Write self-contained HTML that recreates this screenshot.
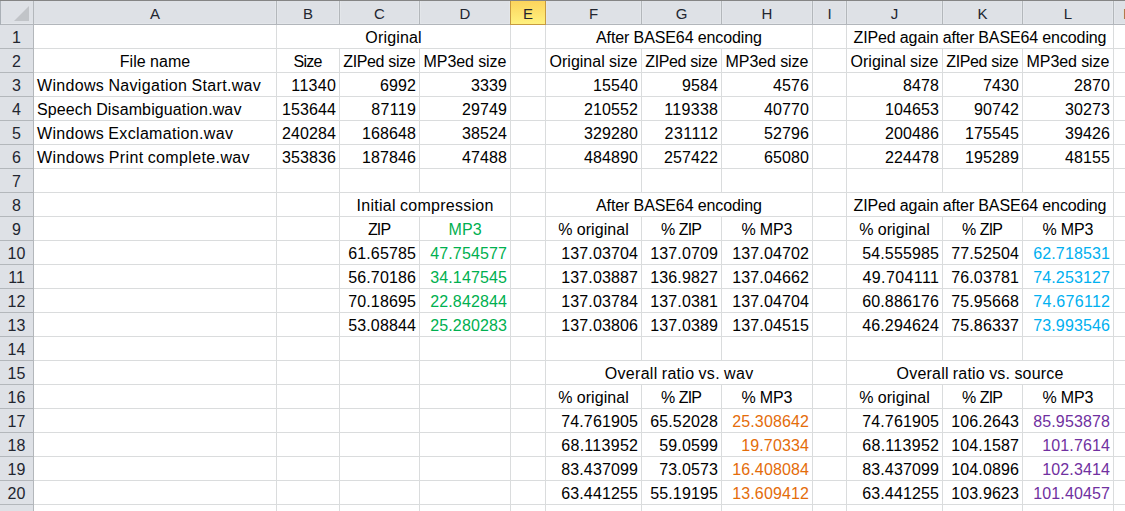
<!DOCTYPE html><html><head><meta charset="utf-8"><style>
html,body{margin:0;padding:0;}
body{width:1125px;height:511px;overflow:hidden;position:relative;background:#fff;font-family:"Liberation Sans",sans-serif;}
div{position:absolute;box-sizing:border-box;}
.t{white-space:nowrap;font-size:16px;line-height:20px;height:20px;color:#000;}
.l{text-align:left}.r{text-align:right}.c{text-align:center}
.h{white-space:nowrap;font-size:15px;line-height:20px;height:20px;color:#222630;text-align:center}

</style></head><body>
<div style="left:276px;top:25px;width:1px;height:487px;background:#dadcdd"></div>
<div style="left:339px;top:48px;width:1px;height:464px;background:#dadcdd"></div>
<div style="left:419px;top:48px;width:1px;height:145px;background:#dadcdd"></div>
<div style="left:419px;top:216px;width:1px;height:296px;background:#dadcdd"></div>
<div style="left:510px;top:25px;width:1px;height:487px;background:#dadcdd"></div>
<div style="left:545px;top:25px;width:1px;height:487px;background:#dadcdd"></div>
<div style="left:641px;top:48px;width:1px;height:145px;background:#dadcdd"></div>
<div style="left:641px;top:216px;width:1px;height:145px;background:#dadcdd"></div>
<div style="left:641px;top:384px;width:1px;height:128px;background:#dadcdd"></div>
<div style="left:721px;top:48px;width:1px;height:145px;background:#dadcdd"></div>
<div style="left:721px;top:216px;width:1px;height:145px;background:#dadcdd"></div>
<div style="left:721px;top:384px;width:1px;height:128px;background:#dadcdd"></div>
<div style="left:812px;top:25px;width:1px;height:487px;background:#dadcdd"></div>
<div style="left:846px;top:25px;width:1px;height:487px;background:#dadcdd"></div>
<div style="left:942px;top:48px;width:1px;height:145px;background:#dadcdd"></div>
<div style="left:942px;top:216px;width:1px;height:145px;background:#dadcdd"></div>
<div style="left:942px;top:384px;width:1px;height:128px;background:#dadcdd"></div>
<div style="left:1022px;top:48px;width:1px;height:145px;background:#dadcdd"></div>
<div style="left:1022px;top:216px;width:1px;height:145px;background:#dadcdd"></div>
<div style="left:1022px;top:384px;width:1px;height:128px;background:#dadcdd"></div>
<div style="left:1113px;top:25px;width:1px;height:487px;background:#dadcdd"></div>
<div style="left:34px;top:48px;width:1091px;height:1px;background:#dadcdd"></div>
<div style="left:34px;top:72px;width:1091px;height:1px;background:#dadcdd"></div>
<div style="left:34px;top:96px;width:1091px;height:1px;background:#dadcdd"></div>
<div style="left:34px;top:120px;width:1091px;height:1px;background:#dadcdd"></div>
<div style="left:34px;top:144px;width:1091px;height:1px;background:#dadcdd"></div>
<div style="left:34px;top:168px;width:1091px;height:1px;background:#dadcdd"></div>
<div style="left:34px;top:192px;width:1091px;height:1px;background:#dadcdd"></div>
<div style="left:34px;top:216px;width:1091px;height:1px;background:#dadcdd"></div>
<div style="left:34px;top:240px;width:1091px;height:1px;background:#dadcdd"></div>
<div style="left:34px;top:264px;width:1091px;height:1px;background:#dadcdd"></div>
<div style="left:34px;top:288px;width:1091px;height:1px;background:#dadcdd"></div>
<div style="left:34px;top:312px;width:1091px;height:1px;background:#dadcdd"></div>
<div style="left:34px;top:336px;width:1091px;height:1px;background:#dadcdd"></div>
<div style="left:34px;top:360px;width:1091px;height:1px;background:#dadcdd"></div>
<div style="left:34px;top:384px;width:1091px;height:1px;background:#dadcdd"></div>
<div style="left:34px;top:408px;width:1091px;height:1px;background:#dadcdd"></div>
<div style="left:34px;top:432px;width:1091px;height:1px;background:#dadcdd"></div>
<div style="left:34px;top:456px;width:1091px;height:1px;background:#dadcdd"></div>
<div style="left:34px;top:480px;width:1091px;height:1px;background:#dadcdd"></div>
<div style="left:34px;top:504px;width:1091px;height:1px;background:#dadcdd"></div>
<div style="left:0;top:0;width:1125px;height:24px;background:#dee1e6"></div>
<div style="left:0;top:0;width:1125px;height:1px;background:#858585"></div>
<div style="left:0;top:24px;width:1125px;height:1px;background:#b2b6bb"></div>
<div style="left:0;top:23px;width:1125px;height:1px;background:#e3e6ea"></div>
<div style="left:0;top:25px;width:33px;height:486px;background:#dee1e6"></div>
<div style="left:0;top:1px;width:1px;height:24px;background:#aab0b6"></div>
<div style="left:33px;top:1px;width:1px;height:510px;background:#b3b7bb"></div>
<svg style="position:absolute;left:0;top:0" width="34" height="25"><polygon points="14,21 29,21 29,6" fill="#c1c4c8"/></svg>
<div style="left:275px;top:1px;width:1px;height:22px;background:#e3e6ea"></div>
<div style="left:277px;top:1px;width:1px;height:22px;background:#e3e6ea"></div>
<div style="left:276px;top:1px;width:1px;height:23px;background:#b3b7bb"></div>
<div style="left:338px;top:1px;width:1px;height:22px;background:#e3e6ea"></div>
<div style="left:340px;top:1px;width:1px;height:22px;background:#e3e6ea"></div>
<div style="left:339px;top:1px;width:1px;height:23px;background:#b3b7bb"></div>
<div style="left:418px;top:1px;width:1px;height:22px;background:#e3e6ea"></div>
<div style="left:420px;top:1px;width:1px;height:22px;background:#e3e6ea"></div>
<div style="left:419px;top:1px;width:1px;height:23px;background:#b3b7bb"></div>
<div style="left:509px;top:1px;width:1px;height:22px;background:#e3e6ea"></div>
<div style="left:511px;top:1px;width:1px;height:22px;background:#e3e6ea"></div>
<div style="left:510px;top:1px;width:1px;height:23px;background:#b3b7bb"></div>
<div style="left:544px;top:1px;width:1px;height:22px;background:#e3e6ea"></div>
<div style="left:546px;top:1px;width:1px;height:22px;background:#e3e6ea"></div>
<div style="left:545px;top:1px;width:1px;height:23px;background:#b3b7bb"></div>
<div style="left:640px;top:1px;width:1px;height:22px;background:#e3e6ea"></div>
<div style="left:642px;top:1px;width:1px;height:22px;background:#e3e6ea"></div>
<div style="left:641px;top:1px;width:1px;height:23px;background:#b3b7bb"></div>
<div style="left:720px;top:1px;width:1px;height:22px;background:#e3e6ea"></div>
<div style="left:722px;top:1px;width:1px;height:22px;background:#e3e6ea"></div>
<div style="left:721px;top:1px;width:1px;height:23px;background:#b3b7bb"></div>
<div style="left:811px;top:1px;width:1px;height:22px;background:#e3e6ea"></div>
<div style="left:813px;top:1px;width:1px;height:22px;background:#e3e6ea"></div>
<div style="left:812px;top:1px;width:1px;height:23px;background:#b3b7bb"></div>
<div style="left:845px;top:1px;width:1px;height:22px;background:#e3e6ea"></div>
<div style="left:847px;top:1px;width:1px;height:22px;background:#e3e6ea"></div>
<div style="left:846px;top:1px;width:1px;height:23px;background:#b3b7bb"></div>
<div style="left:941px;top:1px;width:1px;height:22px;background:#e3e6ea"></div>
<div style="left:943px;top:1px;width:1px;height:22px;background:#e3e6ea"></div>
<div style="left:942px;top:1px;width:1px;height:23px;background:#b3b7bb"></div>
<div style="left:1021px;top:1px;width:1px;height:22px;background:#e3e6ea"></div>
<div style="left:1023px;top:1px;width:1px;height:22px;background:#e3e6ea"></div>
<div style="left:1022px;top:1px;width:1px;height:23px;background:#b3b7bb"></div>
<div style="left:1112px;top:1px;width:1px;height:22px;background:#e3e6ea"></div>
<div style="left:1114px;top:1px;width:1px;height:22px;background:#e3e6ea"></div>
<div style="left:1113px;top:1px;width:1px;height:23px;background:#b3b7bb"></div>
<div style="left:510px;top:1px;width:36px;height:24px;border:1px solid #c79a3f;border-top:none;background:linear-gradient(#fcd45c,#fff17f)"></div>
<div class="h" style="left:34px;top:4px;width:242px">A</div>
<div class="h" style="left:277px;top:4px;width:62px">B</div>
<div class="h" style="left:340px;top:4px;width:79px">C</div>
<div class="h" style="left:420px;top:4px;width:90px">D</div>
<div class="h" style="left:511px;top:4px;width:34px">E</div>
<div class="h" style="left:546px;top:4px;width:95px">F</div>
<div class="h" style="left:642px;top:4px;width:79px">G</div>
<div class="h" style="left:722px;top:4px;width:90px">H</div>
<div class="h" style="left:813px;top:4px;width:33px">I</div>
<div class="h" style="left:847px;top:4px;width:95px">J</div>
<div class="h" style="left:943px;top:4px;width:79px">K</div>
<div class="h" style="left:1023px;top:4px;width:90px">L</div>
<div class="h" style="left:1113px;top:4px;width:33px">M</div>
<div style="left:0;top:48px;width:33px;height:1px;background:#b3b7bb"></div>
<div class="h" style="left:0;top:28px;width:33px;font-size:16px">1</div>
<div style="left:0;top:72px;width:33px;height:1px;background:#b3b7bb"></div>
<div class="h" style="left:0;top:52px;width:33px;font-size:16px">2</div>
<div style="left:0;top:96px;width:33px;height:1px;background:#b3b7bb"></div>
<div class="h" style="left:0;top:76px;width:33px;font-size:16px">3</div>
<div style="left:0;top:120px;width:33px;height:1px;background:#b3b7bb"></div>
<div class="h" style="left:0;top:100px;width:33px;font-size:16px">4</div>
<div style="left:0;top:144px;width:33px;height:1px;background:#b3b7bb"></div>
<div class="h" style="left:0;top:124px;width:33px;font-size:16px">5</div>
<div style="left:0;top:168px;width:33px;height:1px;background:#b3b7bb"></div>
<div class="h" style="left:0;top:148px;width:33px;font-size:16px">6</div>
<div style="left:0;top:192px;width:33px;height:1px;background:#b3b7bb"></div>
<div class="h" style="left:0;top:172px;width:33px;font-size:16px">7</div>
<div style="left:0;top:216px;width:33px;height:1px;background:#b3b7bb"></div>
<div class="h" style="left:0;top:196px;width:33px;font-size:16px">8</div>
<div style="left:0;top:240px;width:33px;height:1px;background:#b3b7bb"></div>
<div class="h" style="left:0;top:220px;width:33px;font-size:16px">9</div>
<div style="left:0;top:264px;width:33px;height:1px;background:#b3b7bb"></div>
<div class="h" style="left:0;top:244px;width:33px;font-size:16px">10</div>
<div style="left:0;top:288px;width:33px;height:1px;background:#b3b7bb"></div>
<div class="h" style="left:0;top:268px;width:33px;font-size:16px">11</div>
<div style="left:0;top:312px;width:33px;height:1px;background:#b3b7bb"></div>
<div class="h" style="left:0;top:292px;width:33px;font-size:16px">12</div>
<div style="left:0;top:336px;width:33px;height:1px;background:#b3b7bb"></div>
<div class="h" style="left:0;top:316px;width:33px;font-size:16px">13</div>
<div style="left:0;top:360px;width:33px;height:1px;background:#b3b7bb"></div>
<div class="h" style="left:0;top:340px;width:33px;font-size:16px">14</div>
<div style="left:0;top:384px;width:33px;height:1px;background:#b3b7bb"></div>
<div class="h" style="left:0;top:364px;width:33px;font-size:16px">15</div>
<div style="left:0;top:408px;width:33px;height:1px;background:#b3b7bb"></div>
<div class="h" style="left:0;top:388px;width:33px;font-size:16px">16</div>
<div style="left:0;top:432px;width:33px;height:1px;background:#b3b7bb"></div>
<div class="h" style="left:0;top:412px;width:33px;font-size:16px">17</div>
<div style="left:0;top:456px;width:33px;height:1px;background:#b3b7bb"></div>
<div class="h" style="left:0;top:436px;width:33px;font-size:16px">18</div>
<div style="left:0;top:480px;width:33px;height:1px;background:#b3b7bb"></div>
<div class="h" style="left:0;top:460px;width:33px;font-size:16px">19</div>
<div style="left:0;top:504px;width:33px;height:1px;background:#b3b7bb"></div>
<div class="h" style="left:0;top:484px;width:33px;font-size:16px">20</div>
<div class="h" style="left:0;top:508px;width:33px;font-size:16px">21</div>
<div class="t c" style="left:277px;top:28px;width:233px;"><span style="letter-spacing:0.177px;margin-right:-0.177px">Original</span></div>
<div class="t c" style="left:546px;top:28px;width:266px;"><span style="letter-spacing:-0.094px;word-spacing:-0.151px;margin-right:0.094px">After BASE64 encoding</span></div>
<div class="t c" style="left:847px;top:28px;width:266px;"><span style="letter-spacing:-0.109px;word-spacing:-0.137px;margin-right:0.109px">ZIPed again after BASE64 encoding</span></div>
<div class="t c" style="left:34px;top:52px;width:242px;"><span style="letter-spacing:0.077px;word-spacing:-0.323px;margin-right:-0.077px">File name</span></div>
<div class="t c" style="left:277px;top:52px;width:62px;"><span style="letter-spacing:-0.711px;margin-right:0.711px">Size</span></div>
<div class="t c" style="left:340px;top:52px;width:79px;"><span style="letter-spacing:-0.364px;word-spacing:0.119px;margin-right:0.364px">ZIPed size</span></div>
<div class="t c" style="left:420px;top:52px;width:90px;"><span style="letter-spacing:-0.053px;word-spacing:-0.192px;margin-right:0.053px">MP3ed size</span></div>
<div class="t c" style="left:546px;top:52px;width:95px;"><span style="letter-spacing:0.006px;word-spacing:-0.252px;margin-right:-0.006px">Original size</span></div>
<div class="t c" style="left:642px;top:52px;width:79px;"><span style="letter-spacing:-0.364px;word-spacing:0.119px;margin-right:0.364px">ZIPed size</span></div>
<div class="t c" style="left:722px;top:52px;width:90px;"><span style="letter-spacing:-0.053px;word-spacing:-0.192px;margin-right:0.053px">MP3ed size</span></div>
<div class="t c" style="left:847px;top:52px;width:95px;"><span style="letter-spacing:0.006px;word-spacing:-0.252px;margin-right:-0.006px">Original size</span></div>
<div class="t c" style="left:943px;top:52px;width:79px;"><span style="letter-spacing:-0.364px;word-spacing:0.119px;margin-right:0.364px">ZIPed size</span></div>
<div class="t c" style="left:1023px;top:52px;width:90px;"><span style="letter-spacing:-0.053px;word-spacing:-0.192px;margin-right:0.053px">MP3ed size</span></div>
<div class="t l" style="left:34px;top:76px;width:242px;padding-left:3px;"><span style="letter-spacing:0.328px;word-spacing:-0.573px;margin-right:-0.328px">Windows Navigation Start.wav</span></div>
<div class="t r" style="left:277px;top:76px;width:62px;padding-right:3px;"><span style="letter-spacing:0.338px;margin-right:-0.338px">11340</span></div>
<div class="t r" style="left:340px;top:76px;width:79px;padding-right:3px;"><span style="letter-spacing:0.102px;margin-right:-0.102px">6992</span></div>
<div class="t r" style="left:420px;top:76px;width:90px;padding-right:3px;"><span style="letter-spacing:0.102px;margin-right:-0.102px">3339</span></div>
<div class="t r" style="left:546px;top:76px;width:95px;padding-right:3px;"><span style="letter-spacing:0.100px;margin-right:-0.100px">15540</span></div>
<div class="t r" style="left:642px;top:76px;width:79px;padding-right:3px;"><span style="letter-spacing:0.102px;margin-right:-0.102px">9584</span></div>
<div class="t r" style="left:722px;top:76px;width:90px;padding-right:3px;"><span style="letter-spacing:0.102px;margin-right:-0.102px">4576</span></div>
<div class="t r" style="left:847px;top:76px;width:95px;padding-right:3px;"><span style="letter-spacing:0.102px;margin-right:-0.102px">8478</span></div>
<div class="t r" style="left:943px;top:76px;width:79px;padding-right:3px;"><span style="letter-spacing:0.102px;margin-right:-0.102px">7430</span></div>
<div class="t r" style="left:1023px;top:76px;width:90px;padding-right:3px;"><span style="letter-spacing:0.102px;margin-right:-0.102px">2870</span></div>
<div class="t l" style="left:34px;top:100px;width:242px;padding-left:3px;"><span style="letter-spacing:0.119px;word-spacing:-0.364px;margin-right:-0.119px">Speech Disambiguation.wav</span></div>
<div class="t r" style="left:277px;top:100px;width:62px;padding-right:3px;"><span style="letter-spacing:0.102px;margin-right:-0.102px">153644</span></div>
<div class="t r" style="left:340px;top:100px;width:79px;padding-right:3px;"><span style="letter-spacing:0.338px;margin-right:-0.338px">87119</span></div>
<div class="t r" style="left:420px;top:100px;width:90px;padding-right:3px;"><span style="letter-spacing:0.100px;margin-right:-0.100px">29749</span></div>
<div class="t r" style="left:546px;top:100px;width:95px;padding-right:3px;"><span style="letter-spacing:0.102px;margin-right:-0.102px">210552</span></div>
<div class="t r" style="left:642px;top:100px;width:79px;padding-right:3px;"><span style="letter-spacing:0.299px;margin-right:-0.299px">119338</span></div>
<div class="t r" style="left:722px;top:100px;width:90px;padding-right:3px;"><span style="letter-spacing:0.100px;margin-right:-0.100px">40770</span></div>
<div class="t r" style="left:847px;top:100px;width:95px;padding-right:3px;"><span style="letter-spacing:0.102px;margin-right:-0.102px">104653</span></div>
<div class="t r" style="left:943px;top:100px;width:79px;padding-right:3px;"><span style="letter-spacing:0.100px;margin-right:-0.100px">90742</span></div>
<div class="t r" style="left:1023px;top:100px;width:90px;padding-right:3px;"><span style="letter-spacing:0.100px;margin-right:-0.100px">30273</span></div>
<div class="t l" style="left:34px;top:124px;width:242px;padding-left:3px;"><span style="letter-spacing:0.322px;word-spacing:-0.567px;margin-right:-0.322px">Windows Exclamation.wav</span></div>
<div class="t r" style="left:277px;top:124px;width:62px;padding-right:3px;"><span style="letter-spacing:0.102px;margin-right:-0.102px">240284</span></div>
<div class="t r" style="left:340px;top:124px;width:79px;padding-right:3px;"><span style="letter-spacing:0.102px;margin-right:-0.102px">168648</span></div>
<div class="t r" style="left:420px;top:124px;width:90px;padding-right:3px;"><span style="letter-spacing:0.100px;margin-right:-0.100px">38524</span></div>
<div class="t r" style="left:546px;top:124px;width:95px;padding-right:3px;"><span style="letter-spacing:0.102px;margin-right:-0.102px">329280</span></div>
<div class="t r" style="left:642px;top:124px;width:79px;padding-right:3px;"><span style="letter-spacing:0.497px;margin-right:-0.497px">231112</span></div>
<div class="t r" style="left:722px;top:124px;width:90px;padding-right:3px;"><span style="letter-spacing:0.100px;margin-right:-0.100px">52796</span></div>
<div class="t r" style="left:847px;top:124px;width:95px;padding-right:3px;"><span style="letter-spacing:0.102px;margin-right:-0.102px">200486</span></div>
<div class="t r" style="left:943px;top:124px;width:79px;padding-right:3px;"><span style="letter-spacing:0.102px;margin-right:-0.102px">175545</span></div>
<div class="t r" style="left:1023px;top:124px;width:90px;padding-right:3px;"><span style="letter-spacing:0.100px;margin-right:-0.100px">39426</span></div>
<div class="t l" style="left:34px;top:148px;width:242px;padding-left:3px;"><span style="letter-spacing:0.372px;word-spacing:-0.617px;margin-right:-0.372px">Windows Print complete.wav</span></div>
<div class="t r" style="left:277px;top:148px;width:62px;padding-right:3px;"><span style="letter-spacing:0.102px;margin-right:-0.102px">353836</span></div>
<div class="t r" style="left:340px;top:148px;width:79px;padding-right:3px;"><span style="letter-spacing:0.102px;margin-right:-0.102px">187846</span></div>
<div class="t r" style="left:420px;top:148px;width:90px;padding-right:3px;"><span style="letter-spacing:0.100px;margin-right:-0.100px">47488</span></div>
<div class="t r" style="left:546px;top:148px;width:95px;padding-right:3px;"><span style="letter-spacing:0.102px;margin-right:-0.102px">484890</span></div>
<div class="t r" style="left:642px;top:148px;width:79px;padding-right:3px;"><span style="letter-spacing:0.102px;margin-right:-0.102px">257422</span></div>
<div class="t r" style="left:722px;top:148px;width:90px;padding-right:3px;"><span style="letter-spacing:0.100px;margin-right:-0.100px">65080</span></div>
<div class="t r" style="left:847px;top:148px;width:95px;padding-right:3px;"><span style="letter-spacing:0.102px;margin-right:-0.102px">224478</span></div>
<div class="t r" style="left:943px;top:148px;width:79px;padding-right:3px;"><span style="letter-spacing:0.102px;margin-right:-0.102px">195289</span></div>
<div class="t r" style="left:1023px;top:148px;width:90px;padding-right:3px;"><span style="letter-spacing:0.100px;margin-right:-0.100px">48155</span></div>
<div class="t c" style="left:340px;top:196px;width:170px;"><span style="letter-spacing:0.269px;word-spacing:-0.514px;margin-right:-0.269px">Initial compression</span></div>
<div class="t c" style="left:546px;top:196px;width:266px;"><span style="letter-spacing:-0.094px;word-spacing:-0.151px;margin-right:0.094px">After BASE64 encoding</span></div>
<div class="t c" style="left:847px;top:196px;width:266px;"><span style="letter-spacing:-0.109px;word-spacing:-0.137px;margin-right:0.109px">ZIPed again after BASE64 encoding</span></div>
<div class="t c" style="left:340px;top:220px;width:79px;"><span style="letter-spacing:-0.890px;margin-right:0.890px">ZIP</span></div>
<div class="t c" style="left:420px;top:220px;width:90px;color:#00b050;"><span style="letter-spacing:0.141px;margin-right:-0.141px">MP3</span></div>
<div class="t c" style="left:546px;top:220px;width:95px;"><span style="letter-spacing:0.068px;word-spacing:-0.313px;margin-right:-0.068px">% original</span></div>
<div class="t c" style="left:642px;top:220px;width:79px;"><span style="letter-spacing:-0.785px;word-spacing:0.540px;margin-right:0.785px">% ZIP</span></div>
<div class="t c" style="left:722px;top:220px;width:90px;"><span style="letter-spacing:-0.167px;word-spacing:-0.079px;margin-right:0.167px">% MP3</span></div>
<div class="t c" style="left:847px;top:220px;width:95px;"><span style="letter-spacing:0.068px;word-spacing:-0.313px;margin-right:-0.068px">% original</span></div>
<div class="t c" style="left:943px;top:220px;width:79px;"><span style="letter-spacing:-0.785px;word-spacing:0.540px;margin-right:0.785px">% ZIP</span></div>
<div class="t c" style="left:1023px;top:220px;width:90px;"><span style="letter-spacing:-0.167px;word-spacing:-0.079px;margin-right:0.167px">% MP3</span></div>
<div class="t r" style="left:340px;top:244px;width:79px;padding-right:3px;"><span style="letter-spacing:0.158px;margin-right:-0.158px">61.65785</span></div>
<div class="t r" style="left:420px;top:244px;width:90px;padding-right:3px;color:#00b050;"><span style="letter-spacing:0.151px;margin-right:-0.151px">47.754577</span></div>
<div class="t r" style="left:546px;top:244px;width:95px;padding-right:3px;"><span style="letter-spacing:0.151px;margin-right:-0.151px">137.03704</span></div>
<div class="t r" style="left:642px;top:244px;width:79px;padding-right:3px;"><span style="letter-spacing:0.158px;margin-right:-0.158px">137.0709</span></div>
<div class="t r" style="left:722px;top:244px;width:90px;padding-right:3px;"><span style="letter-spacing:0.151px;margin-right:-0.151px">137.04702</span></div>
<div class="t r" style="left:847px;top:244px;width:95px;padding-right:3px;"><span style="letter-spacing:0.151px;margin-right:-0.151px">54.555985</span></div>
<div class="t r" style="left:943px;top:244px;width:79px;padding-right:3px;"><span style="letter-spacing:0.158px;margin-right:-0.158px">77.52504</span></div>
<div class="t r" style="left:1023px;top:244px;width:90px;padding-right:3px;color:#00b0f0;"><span style="letter-spacing:0.151px;margin-right:-0.151px">62.718531</span></div>
<div class="t r" style="left:340px;top:268px;width:79px;padding-right:3px;"><span style="letter-spacing:0.158px;margin-right:-0.158px">56.70186</span></div>
<div class="t r" style="left:420px;top:268px;width:90px;padding-right:3px;color:#00b050;"><span style="letter-spacing:0.151px;margin-right:-0.151px">34.147545</span></div>
<div class="t r" style="left:546px;top:268px;width:95px;padding-right:3px;"><span style="letter-spacing:0.151px;margin-right:-0.151px">137.03887</span></div>
<div class="t r" style="left:642px;top:268px;width:79px;padding-right:3px;"><span style="letter-spacing:0.158px;margin-right:-0.158px">136.9827</span></div>
<div class="t r" style="left:722px;top:268px;width:90px;padding-right:3px;"><span style="letter-spacing:0.151px;margin-right:-0.151px">137.04662</span></div>
<div class="t r" style="left:847px;top:268px;width:95px;padding-right:3px;"><span style="letter-spacing:0.415px;margin-right:-0.415px">49.704111</span></div>
<div class="t r" style="left:943px;top:268px;width:79px;padding-right:3px;"><span style="letter-spacing:0.158px;margin-right:-0.158px">76.03781</span></div>
<div class="t r" style="left:1023px;top:268px;width:90px;padding-right:3px;color:#00b0f0;"><span style="letter-spacing:0.151px;margin-right:-0.151px">74.253127</span></div>
<div class="t r" style="left:340px;top:292px;width:79px;padding-right:3px;"><span style="letter-spacing:0.158px;margin-right:-0.158px">70.18695</span></div>
<div class="t r" style="left:420px;top:292px;width:90px;padding-right:3px;color:#00b050;"><span style="letter-spacing:0.151px;margin-right:-0.151px">22.842844</span></div>
<div class="t r" style="left:546px;top:292px;width:95px;padding-right:3px;"><span style="letter-spacing:0.151px;margin-right:-0.151px">137.03784</span></div>
<div class="t r" style="left:642px;top:292px;width:79px;padding-right:3px;"><span style="letter-spacing:0.158px;margin-right:-0.158px">137.0381</span></div>
<div class="t r" style="left:722px;top:292px;width:90px;padding-right:3px;"><span style="letter-spacing:0.151px;margin-right:-0.151px">137.04704</span></div>
<div class="t r" style="left:847px;top:292px;width:95px;padding-right:3px;"><span style="letter-spacing:0.151px;margin-right:-0.151px">60.886176</span></div>
<div class="t r" style="left:943px;top:292px;width:79px;padding-right:3px;"><span style="letter-spacing:0.158px;margin-right:-0.158px">75.95668</span></div>
<div class="t r" style="left:1023px;top:292px;width:90px;padding-right:3px;color:#00b0f0;"><span style="letter-spacing:0.283px;margin-right:-0.283px">74.676112</span></div>
<div class="t r" style="left:340px;top:316px;width:79px;padding-right:3px;"><span style="letter-spacing:0.158px;margin-right:-0.158px">53.08844</span></div>
<div class="t r" style="left:420px;top:316px;width:90px;padding-right:3px;color:#00b050;"><span style="letter-spacing:0.151px;margin-right:-0.151px">25.280283</span></div>
<div class="t r" style="left:546px;top:316px;width:95px;padding-right:3px;"><span style="letter-spacing:0.151px;margin-right:-0.151px">137.03806</span></div>
<div class="t r" style="left:642px;top:316px;width:79px;padding-right:3px;"><span style="letter-spacing:0.158px;margin-right:-0.158px">137.0389</span></div>
<div class="t r" style="left:722px;top:316px;width:90px;padding-right:3px;"><span style="letter-spacing:0.151px;margin-right:-0.151px">137.04515</span></div>
<div class="t r" style="left:847px;top:316px;width:95px;padding-right:3px;"><span style="letter-spacing:0.151px;margin-right:-0.151px">46.294624</span></div>
<div class="t r" style="left:943px;top:316px;width:79px;padding-right:3px;"><span style="letter-spacing:0.158px;margin-right:-0.158px">75.86337</span></div>
<div class="t r" style="left:1023px;top:316px;width:90px;padding-right:3px;color:#00b0f0;"><span style="letter-spacing:0.151px;margin-right:-0.151px">73.993546</span></div>
<div class="t c" style="left:546px;top:364px;width:266px;"><span style="letter-spacing:0.294px;word-spacing:-0.539px;margin-right:-0.294px">Overall ratio vs. wav</span></div>
<div class="t c" style="left:847px;top:364px;width:266px;"><span style="letter-spacing:0.199px;word-spacing:-0.445px;margin-right:-0.199px">Overall ratio vs. source</span></div>
<div class="t c" style="left:546px;top:388px;width:95px;"><span style="letter-spacing:0.068px;word-spacing:-0.313px;margin-right:-0.068px">% original</span></div>
<div class="t c" style="left:642px;top:388px;width:79px;"><span style="letter-spacing:-0.785px;word-spacing:0.540px;margin-right:0.785px">% ZIP</span></div>
<div class="t c" style="left:722px;top:388px;width:90px;"><span style="letter-spacing:-0.167px;word-spacing:-0.079px;margin-right:0.167px">% MP3</span></div>
<div class="t c" style="left:847px;top:388px;width:95px;"><span style="letter-spacing:0.068px;word-spacing:-0.313px;margin-right:-0.068px">% original</span></div>
<div class="t c" style="left:943px;top:388px;width:79px;"><span style="letter-spacing:-0.785px;word-spacing:0.540px;margin-right:0.785px">% ZIP</span></div>
<div class="t c" style="left:1023px;top:388px;width:90px;"><span style="letter-spacing:-0.167px;word-spacing:-0.079px;margin-right:0.167px">% MP3</span></div>
<div class="t r" style="left:546px;top:412px;width:95px;padding-right:3px;"><span style="letter-spacing:0.151px;margin-right:-0.151px">74.761905</span></div>
<div class="t r" style="left:642px;top:412px;width:79px;padding-right:3px;"><span style="letter-spacing:0.158px;margin-right:-0.158px">65.52028</span></div>
<div class="t r" style="left:722px;top:412px;width:90px;padding-right:3px;color:#e46c0a;"><span style="letter-spacing:0.151px;margin-right:-0.151px">25.308642</span></div>
<div class="t r" style="left:847px;top:412px;width:95px;padding-right:3px;"><span style="letter-spacing:0.151px;margin-right:-0.151px">74.761905</span></div>
<div class="t r" style="left:943px;top:412px;width:79px;padding-right:3px;"><span style="letter-spacing:0.158px;margin-right:-0.158px">106.2643</span></div>
<div class="t r" style="left:1023px;top:412px;width:90px;padding-right:3px;color:#7030a0;"><span style="letter-spacing:0.151px;margin-right:-0.151px">85.953878</span></div>
<div class="t r" style="left:546px;top:436px;width:95px;padding-right:3px;"><span style="letter-spacing:0.283px;margin-right:-0.283px">68.113952</span></div>
<div class="t r" style="left:642px;top:436px;width:79px;padding-right:3px;"><span style="letter-spacing:0.165px;margin-right:-0.165px">59.0599</span></div>
<div class="t r" style="left:722px;top:436px;width:90px;padding-right:3px;color:#e46c0a;"><span style="letter-spacing:0.158px;margin-right:-0.158px">19.70334</span></div>
<div class="t r" style="left:847px;top:436px;width:95px;padding-right:3px;"><span style="letter-spacing:0.283px;margin-right:-0.283px">68.113952</span></div>
<div class="t r" style="left:943px;top:436px;width:79px;padding-right:3px;"><span style="letter-spacing:0.158px;margin-right:-0.158px">104.1587</span></div>
<div class="t r" style="left:1023px;top:436px;width:90px;padding-right:3px;color:#7030a0;"><span style="letter-spacing:0.158px;margin-right:-0.158px">101.7614</span></div>
<div class="t r" style="left:546px;top:460px;width:95px;padding-right:3px;"><span style="letter-spacing:0.151px;margin-right:-0.151px">83.437099</span></div>
<div class="t r" style="left:642px;top:460px;width:79px;padding-right:3px;"><span style="letter-spacing:0.165px;margin-right:-0.165px">73.0573</span></div>
<div class="t r" style="left:722px;top:460px;width:90px;padding-right:3px;color:#e46c0a;"><span style="letter-spacing:0.151px;margin-right:-0.151px">16.408084</span></div>
<div class="t r" style="left:847px;top:460px;width:95px;padding-right:3px;"><span style="letter-spacing:0.151px;margin-right:-0.151px">83.437099</span></div>
<div class="t r" style="left:943px;top:460px;width:79px;padding-right:3px;"><span style="letter-spacing:0.158px;margin-right:-0.158px">104.0896</span></div>
<div class="t r" style="left:1023px;top:460px;width:90px;padding-right:3px;color:#7030a0;"><span style="letter-spacing:0.158px;margin-right:-0.158px">102.3414</span></div>
<div class="t r" style="left:546px;top:484px;width:95px;padding-right:3px;"><span style="letter-spacing:0.151px;margin-right:-0.151px">63.441255</span></div>
<div class="t r" style="left:642px;top:484px;width:79px;padding-right:3px;"><span style="letter-spacing:0.158px;margin-right:-0.158px">55.19195</span></div>
<div class="t r" style="left:722px;top:484px;width:90px;padding-right:3px;color:#e46c0a;"><span style="letter-spacing:0.151px;margin-right:-0.151px">13.609412</span></div>
<div class="t r" style="left:847px;top:484px;width:95px;padding-right:3px;"><span style="letter-spacing:0.151px;margin-right:-0.151px">63.441255</span></div>
<div class="t r" style="left:943px;top:484px;width:79px;padding-right:3px;"><span style="letter-spacing:0.158px;margin-right:-0.158px">103.9623</span></div>
<div class="t r" style="left:1023px;top:484px;width:90px;padding-right:3px;color:#7030a0;"><span style="letter-spacing:0.151px;margin-right:-0.151px">101.40457</span></div>
</body></html>
